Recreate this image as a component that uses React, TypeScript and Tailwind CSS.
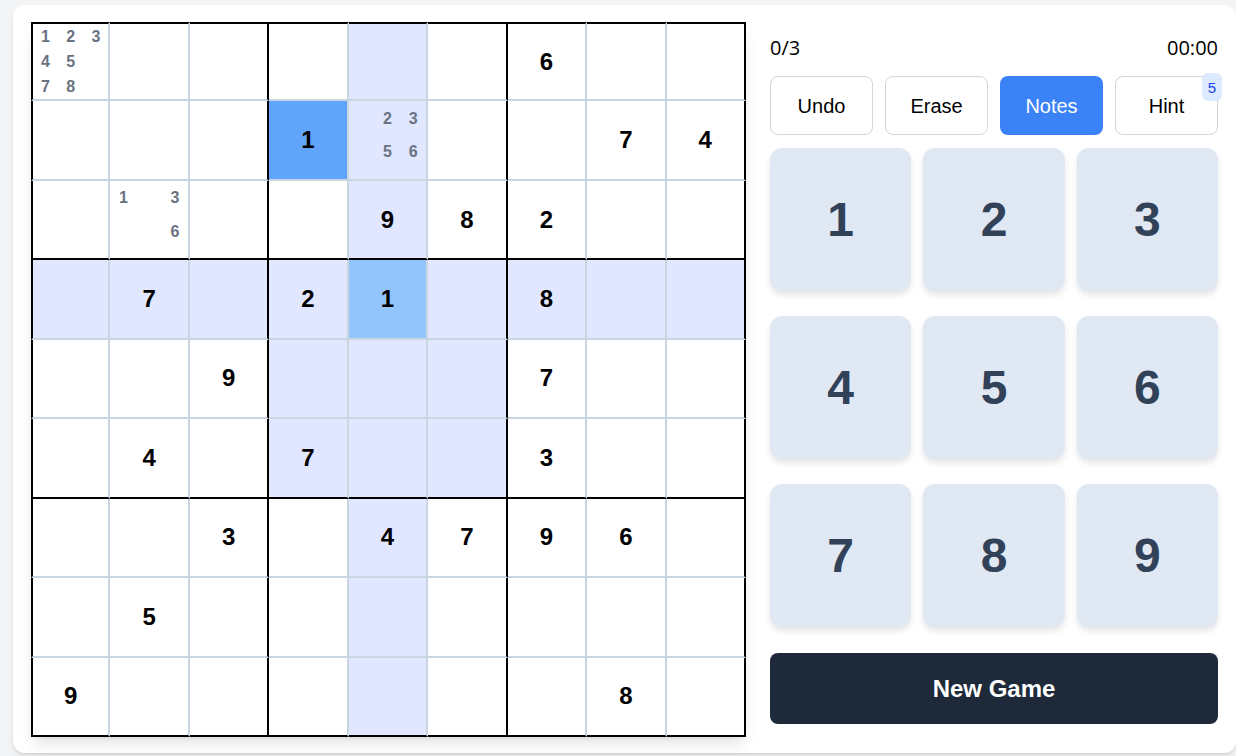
import React from 'react';

type Cell = { v?: number; notes?: number[] };

const rows: Cell[][] = [
  [{ notes: [1, 2, 3, 4, 5, 7, 8] }, {}, {}, {}, {}, {}, { v: 6 }, {}, {}],
  [{}, {}, {}, { v: 1 }, { notes: [2, 3, 5, 6] }, {}, {}, { v: 7 }, { v: 4 }],
  [{}, { notes: [1, 3, 6] }, {}, {}, { v: 9 }, { v: 8 }, { v: 2 }, {}, {}],
  [{}, { v: 7 }, {}, { v: 2 }, { v: 1 }, {}, { v: 8 }, {}, {}],
  [{}, {}, { v: 9 }, {}, {}, {}, { v: 7 }, {}, {}],
  [{}, { v: 4 }, {}, { v: 7 }, {}, {}, { v: 3 }, {}, {}],
  [{}, {}, { v: 3 }, {}, { v: 4 }, { v: 7 }, { v: 9 }, { v: 6 }, {}],
  [{}, { v: 5 }, {}, {}, {}, {}, {}, {}, {}],
  [{ v: 9 }, {}, {}, {}, {}, {}, {}, { v: 8 }, {}],
];

const sel = { r: 3, c: 4 };

function cellBg(r: number, c: number, cell: Cell) {
  if (r === sel.r && c === sel.c) return 'bg-[#93c5fd]';
  if (cell.v === rows[sel.r][sel.c].v) return 'bg-[#60a5fa]';
  const sameBox = Math.floor(r / 3) === Math.floor(sel.r / 3) && Math.floor(c / 3) === Math.floor(sel.c / 3);
  if (r === sel.r || c === sel.c || sameBox) return 'bg-[#e0e7ff]';
  return 'bg-white';
}

function Notes({ notes }: { notes: number[] }) {
  return (
    <div className="grid grid-cols-3 w-full h-full">
      {[1, 2, 3, 4, 5, 6, 7, 8, 9].map(n =>
        notes.includes(n) ? (
          <span key={n} className="flex items-center justify-center text-[16px] leading-[23px] font-bold text-gray-500">
            {n}
          </span>
        ) : (
          <span key={n} />
        )
      )}
    </div>
  );
}

function Board() {
  return (
    <div className="w-[715px] h-[715px] shrink-0 grid grid-cols-9 grid-rows-9 shadow-lg bg-white">
      {rows.map((row, r) =>
        row.map((cell, c) => {
          const left = c === 0 ? 'border-l-2 border-l-black' : '';
          const top = r === 0 ? 'border-t-2 border-t-black' : '';
          const right = c === 2 || c === 5 || c === 8 ? 'border-r-2 border-r-black' : 'border-r-2 border-r-slate-300';
          const bottom = r === 2 || r === 5 || r === 8 ? 'border-b-2 border-b-black' : 'border-b-2 border-b-slate-300';
          return (
            <div
              key={`${r}-${c}`}
              className={`${left} ${top} ${right} ${bottom} ${cellBg(r, c, cell)} flex items-center justify-center`}
            >
              {cell.v ? (
                <span className="text-2xl font-bold text-black">{cell.v}</span>
              ) : cell.notes ? (
                <Notes notes={cell.notes} />
              ) : null}
            </div>
          );
        })
      )}
    </div>
  );
}

export default function App() {
  return (
    <div className="min-h-screen bg-gray-100 pt-[5px] pl-[13px] font-['Liberation_Sans',Arial,sans-serif] overflow-hidden">
      <div className="w-[1223px] bg-white rounded-xl shadow-md pt-[17px] pb-4 pl-[18px] pr-[18px] flex gap-6">
        <Board />

        {/* Controls */}
        <div className="w-[448px] flex flex-col">
          <div className="mt-3 flex justify-between items-center text-xl leading-7 text-black font-['Open_Sans',sans-serif]">
            <span>0/3</span>
            <span>00:00</span>
          </div>

          <div className="mt-[14px] grid grid-cols-4 gap-3">
            {['Undo', 'Erase', 'Notes', 'Hint'].map(label => (
              <button
                key={label}
                className={`relative h-[59px] rounded-lg text-xl ${
                  label === 'Notes' ? 'bg-[#3b82f6] text-white' : 'bg-white text-black border border-gray-300'
                }`}
              >
                {label}
                {label === 'Hint' && (
                  <span className="absolute -top-[4px] -right-[5px] w-5 h-7 rounded-md bg-[#dbeafe] text-blue-700 text-[15px] flex items-center justify-center">
                    5
                  </span>
                )}
              </button>
            ))}
          </div>

          <div className="mt-[13px] grid grid-cols-3 gap-x-3 gap-y-[25px]">
            {[1, 2, 3, 4, 5, 6, 7, 8, 9].map(n => (
              <button
                key={n}
                className="h-[143px] rounded-xl bg-[#dfe8f3] shadow-[0_4px_6px_rgba(0,0,0,0.1)] text-5xl font-bold text-slate-700 flex items-center justify-center"
              >
                {n}
              </button>
            ))}
          </div>

          <button className="mt-[26px] h-[71px] rounded-lg bg-gray-800 text-white text-2xl font-bold">New Game</button>
        </div>
      </div>
    </div>
  );
}
